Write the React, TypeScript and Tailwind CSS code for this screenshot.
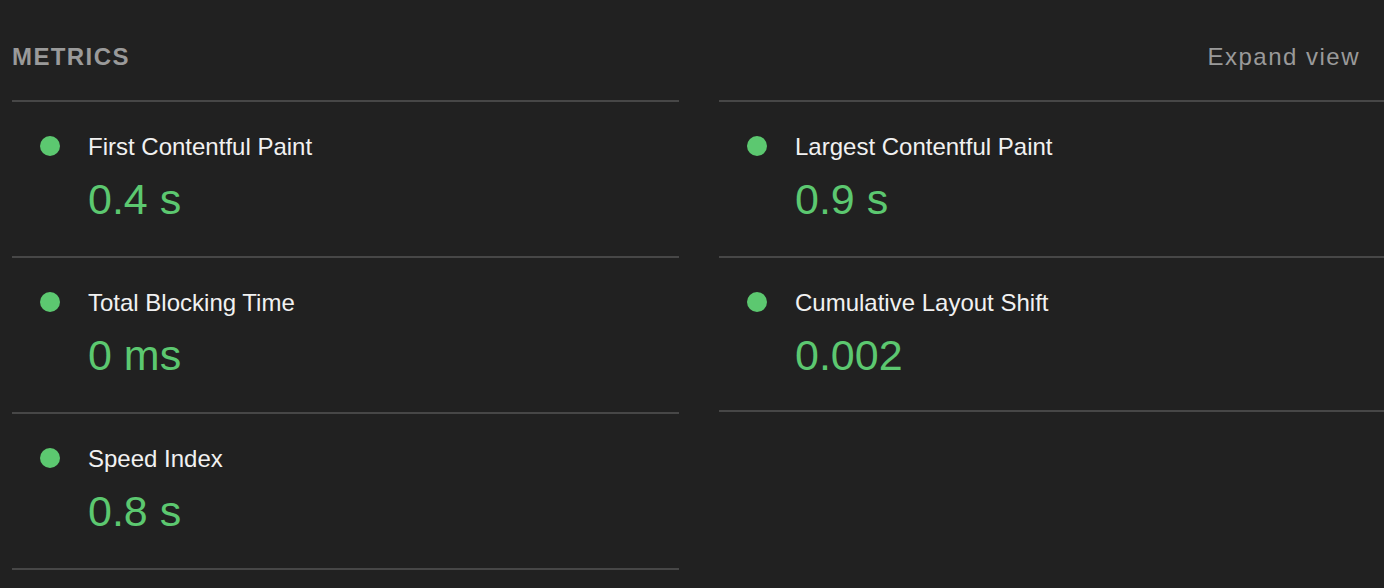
type Metric = {
  id: string;
  title: string;
  value: string;
  tight?: boolean;
};

const leftMetrics: Metric[] = [
  { id: "fcp", title: "First Contentful Paint", value: "0.4 s" },
  { id: "tbt", title: "Total Blocking Time", value: "0 ms" },
  { id: "si", title: "Speed Index", value: "0.8 s" },
];

const rightMetrics: Metric[] = [
  { id: "lcp", title: "Largest Contentful Paint", value: "0.9 s" },
  { id: "cls", title: "Cumulative Layout Shift", value: "0.002", tight: true },
];

function MetricRow({ metric }: { metric: Metric }) {
  return (
    <div
      className={
        "flex border-b-2 border-[#474747] pl-[28px] pt-[31px] " +
        (metric.tight ? "pb-[30px]" : "pb-[32px]")
      }
    >
      <span className="mt-[3px] h-[20px] w-[20px] shrink-0 rounded-full bg-[#5cc870]" />
      <div className="ml-[28px] flex flex-col">
        <div className="text-[24px] leading-[28px] text-[#f1f1f1]">{metric.title}</div>
        <div className="mt-[13px] text-[43px] leading-[50px] text-[#5cc870]">{metric.value}</div>
      </div>
    </div>
  );
}

function MetricColumn({ items }: { items: Metric[] }) {
  return (
    <div className="flex flex-col border-t-2 border-[#474747]">
      {items.map((m) => (
        <MetricRow key={m.id} metric={m} />
      ))}
    </div>
  );
}

export default function App() {
  return (
    <div
      className="h-[588px] w-[1384px] overflow-hidden bg-[#212121]"
      style={{ fontFamily: '"Liberation Sans", Arial, sans-serif' }}
    >
      <div className="flex h-[100px] items-start justify-between pl-[12px] pr-[24px] pt-[43px]">
        <div className="text-[24px] font-bold uppercase leading-[28px] tracking-[1.4px] text-[#9a9a9a]">
          Metrics
        </div>
        <button type="button" className="text-[24px] leading-[28px] tracking-[1.5px] text-[#9a9a9a]">
          Expand view
        </button>
      </div>

      <div className="grid grid-cols-[667px_667px] gap-x-[40px] pl-[12px]">
        <MetricColumn items={leftMetrics} />
        <MetricColumn items={rightMetrics} />
      </div>
    </div>
  );
}
